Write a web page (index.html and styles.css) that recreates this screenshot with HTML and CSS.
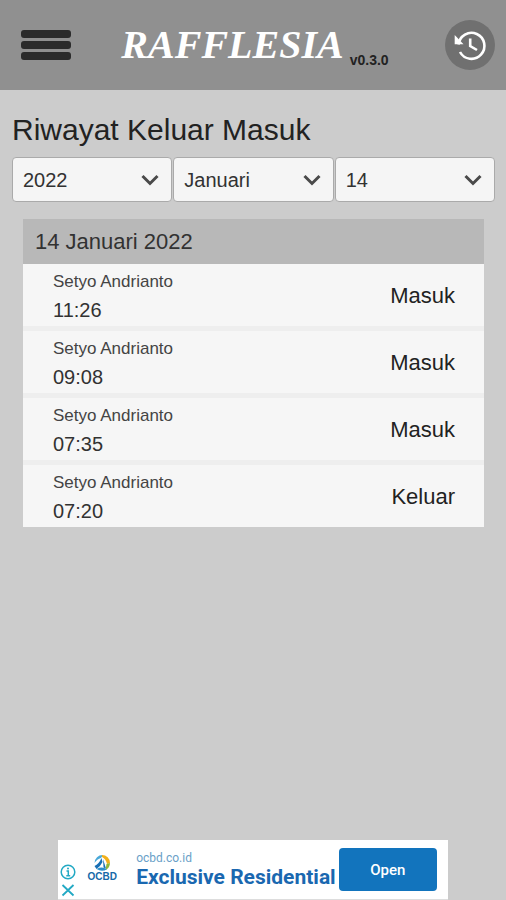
FILE: index.html
```html
<!DOCTYPE html>
<html lang="id">
<head>
    <meta charset="UTF-8">
    <meta name="viewport" content="width=device-width, initial-scale=1.0">
    <title>Rafflesia - Riwayat Keluar Masuk</title>
    <link rel="stylesheet" href="styles.css">
</head>
<body>
    <header class="topbar">
        <button class="menu-btn" type="button" aria-label="Menu">
            <span></span>
            <span></span>
            <span></span>
        </button>
        <div class="brand">
            <span class="brand-name">RAFFLESIA</span>
            <span class="version">v0.3.0</span>
        </div>
        <button class="history-btn" type="button" aria-label="Riwayat">
            <svg viewBox="0 0 50 50" fill="none" stroke="#fff">
                <path d="M13.500 24.500 A13 13 0 1 1 15 32" stroke-width="2.600"/>
                <path d="M9.700 15 L9.700 24.300 L18.500 24.300 Z" fill="#fff" stroke="none"/>
                <path d="M25.200 18.500 V26 L32 30" stroke-width="2.600"/>
            </svg>
        </button>
    </header>

    <main class="content">
        <h1>Riwayat Keluar Masuk</h1>

        <form class="filters">
            <div class="select-box">
                <select aria-label="Tahun">
                    <option>2022</option>
                </select>
                <svg viewBox="0 0 18 12"><path d="M1.500 2 L9 9.500 L16.500 2"/></svg>
            </div>
            <div class="select-box">
                <select aria-label="Bulan">
                    <option>Januari</option>
                </select>
                <svg viewBox="0 0 18 12"><path d="M1.500 2 L9 9.500 L16.500 2"/></svg>
            </div>
            <div class="select-box">
                <select aria-label="Tanggal">
                    <option>14</option>
                </select>
                <svg viewBox="0 0 18 12"><path d="M1.500 2 L9 9.500 L16.500 2"/></svg>
            </div>
        </form>

        <section class="history">
            <h2>14 Januari 2022</h2>
            <ul>
                <li>
                    <div class="person">
                        <span class="name">Setyo Andrianto</span>
                        <span class="time">11:26</span>
                    </div>
                    <span class="status">Masuk</span>
                </li>
                <li>
                    <div class="person">
                        <span class="name">Setyo Andrianto</span>
                        <span class="time">09:08</span>
                    </div>
                    <span class="status">Masuk</span>
                </li>
                <li>
                    <div class="person">
                        <span class="name">Setyo Andrianto</span>
                        <span class="time">07:35</span>
                    </div>
                    <span class="status">Masuk</span>
                </li>
                <li>
                    <div class="person">
                        <span class="name">Setyo Andrianto</span>
                        <span class="time">07:20</span>
                    </div>
                    <span class="status">Keluar</span>
                </li>
            </ul>
        </section>
    </main>

    <aside class="ad">
        <div class="ad-controls">
            <button type="button" aria-label="Info iklan">
                <svg viewBox="0 0 16 16" fill="none" stroke="#22a9c4" stroke-width="1.500">
                    <circle cx="8" cy="8" r="6.800"/>
                    <path d="M6.500 7 H8.300 V11.500 M6.300 11.700 H10.200"/>
                    <circle cx="8" cy="4.500" r="1" fill="#22a9c4" stroke="none"/>
                </svg>
            </button>
            <button type="button" aria-label="Tutup iklan">
                <svg viewBox="0 0 16 16" fill="none" stroke="#22a9c4" stroke-width="1.800">
                    <path d="M2.500 3 L13.500 13.500 M13.500 3 L2.500 13.500"/>
                </svg>
            </button>
        </div>
        <div class="ad-logo">
            <svg viewBox="0 0 18 18">
                <path d="M1.500 9 A8 8 0 0 1 10 1 L8 4 Q4 5 1.500 9 Z" fill="#49a8d8"/>
                <path d="M9 1 A8 8 0 0 1 17 9 L14 10 Q13 5 9 3 Z" fill="#f2b01b"/>
                <path d="M17 9 A8 8 0 0 1 12.500 16 L13.500 10 Z" fill="#8fb83a"/>
                <path d="M1.500 12 Q6 10 8.500 4 L9.500 8 Q7 13 3.500 15 Z" fill="#176fb5"/>
                <path d="M10 5 L13 14.500 L10.500 13.500 Z" fill="#176fb5"/>
                <path d="M3.500 15 Q9 12 14 15.200 Q9 18.500 3.500 15 Z" fill="#2b8fcb"/>
            </svg>
            <span>OCBD</span>
        </div>
        <div class="ad-text">
            <a class="ad-domain" href="#">ocbd.co.id</a>
            <a class="ad-title" href="#">Exclusive Residential</a>
        </div>
        <button class="ad-open" type="button">Open</button>
    </aside>
</body>
</html>
```
FILE: styles.css
```css
* {
    box-sizing: border-box;
}
body {
    margin: 0;
    min-height: 100vh;
    display: flex;
    flex-direction: column;
    background: #ccc;
    color: #222;
    font-family: "Liberation Sans", Arial, sans-serif;
}
button {
    padding: 0;
    border: none;
    background: none;
    cursor: pointer;
}
svg {
    display: block;
}

/* header */
.topbar {
    display: flex;
    align-items: center;
    justify-content: space-between;
    height: 90px;
    padding: 0 11px 0 21px;
    background: #909090;
}
.menu-btn {
    display: flex;
    flex-direction: column;
    gap: 3px;
    width: 50px;
}
.menu-btn span {
    height: 8px;
    border-radius: 3px;
    background: #2b2b2b;
}
.brand {
    display: flex;
    align-items: flex-end;
    gap: 6px;
    padding-right: 6px;
}
.brand-name {
    color: #fff;
    font-family: "Liberation Serif", "Times New Roman", serif;
    font-size: 40px;
    font-style: italic;
    font-weight: bold;
    line-height: 46px;
}
.version {
    font-size: 14px;
    font-weight: bold;
    line-height: 16px;
}
.history-btn {
    width: 50px;
    height: 50px;
    border-radius: 50%;
    background: #707070;
}

/* page */
.content {
    padding: 22px 11px 0 12px;
}
h1 {
    margin: 0 0 10px;
    font-size: 30px;
    font-weight: normal;
    line-height: 35px;
}
.filters {
    display: flex;
    gap: 1px;
}
.select-box {
    position: relative;
    flex: 1;
}
.select-box select {
    appearance: none;
    display: block;
    width: 100%;
    height: 45px;
    padding: 0 36px 0 10px;
    border: 1px solid #aaa;
    border-radius: 4px;
    background: #f5f5f5;
    color: #323232;
    font-family: inherit;
    font-size: 20px;
}
.select-box svg {
    position: absolute;
    top: 17px;
    right: 13px;
    width: 18px;
    height: 12px;
    fill: none;
    stroke: #4a4a4a;
    stroke-width: 3;
    pointer-events: none;
}

.history {
    margin: 17px 11px 0;
}
h2 {
    margin: 0;
    padding: 0 12px;
    background: #b8b8b8;
    color: #323232;
    font-size: 22px;
    font-weight: normal;
    line-height: 45px;
}
.history ul {
    display: flex;
    flex-direction: column;
    gap: 5px;
    margin: 0;
    padding: 0;
    list-style: none;
    background: #eee;
}
.history li {
    display: flex;
    align-items: center;
    justify-content: space-between;
    padding: 4px 29px 2px 30px;
    background: #f6f6f6;
}
.person {
    display: flex;
    flex-direction: column;
}
.name {
    color: #444;
    font-size: 17px;
    line-height: 28px;
}
.time {
    color: #323232;
    font-size: 20px;
    line-height: 28px;
}
.status {
    font-size: 22px;
}

/* ad banner */
.ad {
    display: flex;
    align-items: center;
    align-self: center;
    width: 77%;
    height: 60px;
    margin-top: auto;
    padding: 0 11px 0 2px;
    border-bottom: 1px solid #ddd;
    background: #fff;
}
.ad-controls {
    align-self: flex-end;
    display: flex;
    flex-direction: column;
    gap: 2px;
    padding-bottom: 1px;
}
.ad-controls svg {
    width: 16px;
    height: 16px;
}
.ad-logo {
    display: flex;
    flex-direction: column;
    align-items: center;
    width: 52px;
    padding-bottom: 4px;
    color: #1668a8;
    font-size: 10px;
    font-weight: bold;
    line-height: 10px;
}
.ad-logo svg {
    width: 18px;
    height: 18px;
}
.ad-text {
    display: flex;
    flex: 1;
    flex-direction: column;
    padding-left: 8px;
    font-family: Roboto, sans-serif;
    white-space: nowrap;
}
.ad-text a {
    text-decoration: none;
}
.ad-domain {
    color: #6a9fc8;
    font-size: 12px;
    line-height: 14px;
}
.ad-title {
    color: #1a68b0;
    font-size: 21px;
    font-weight: bold;
    line-height: 24px;
}
.ad-open {
    width: 98px;
    height: 43px;
    border-radius: 4px;
    background: #1274bd;
    color: #fff;
    font-family: Roboto, sans-serif;
    font-size: 15px;
    font-weight: 500;
}
```
